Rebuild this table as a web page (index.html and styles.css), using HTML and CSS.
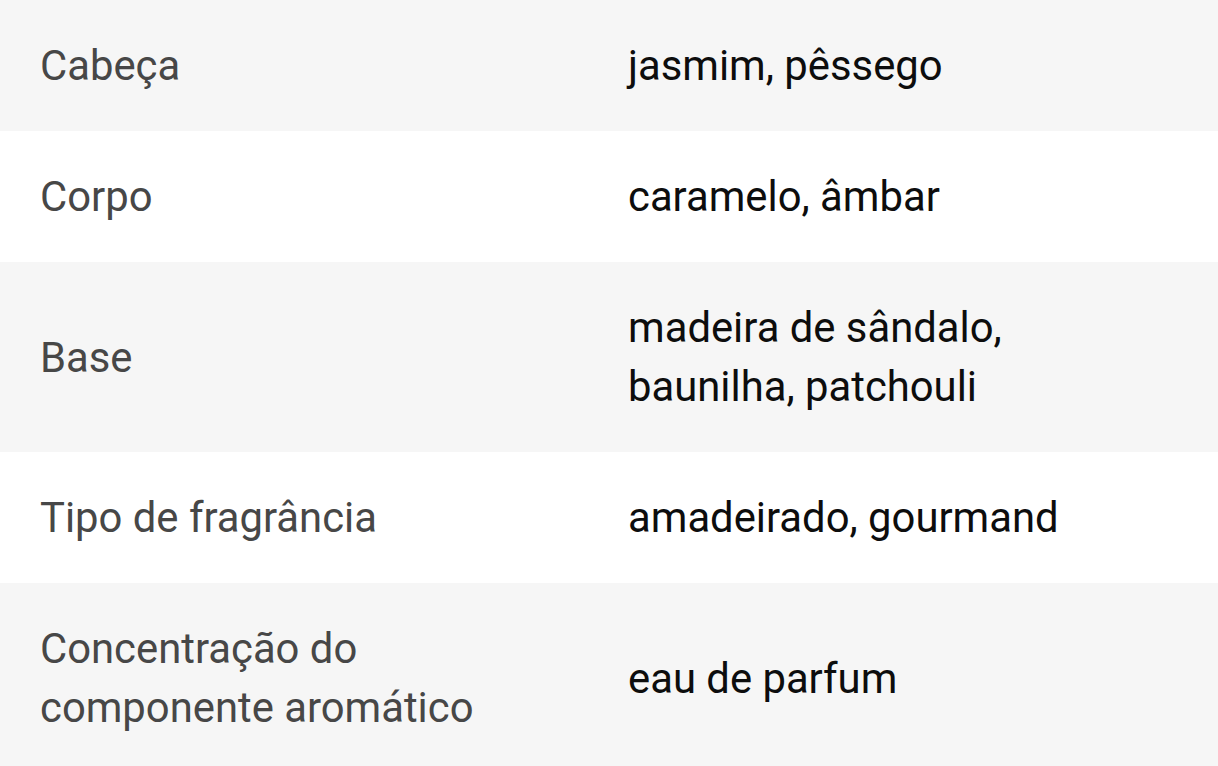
FILE: index.html
```html
<!DOCTYPE html>
<html lang="pt">
<head>
<meta charset="utf-8">
<link rel="stylesheet" href="styles.css">
</head>
<body>
<div class="specs">
  <div class="row alt"><div class="label">Cabeça</div><div class="value">jasmim, pêssego</div></div>
  <div class="row"><div class="label">Corpo</div><div class="value">caramelo, âmbar</div></div>
  <div class="row alt"><div class="label">Base</div><div class="value">madeira de sândalo, baunilha, patchouli</div></div>
  <div class="row"><div class="label">Tipo de fragrância</div><div class="value">amadeirado, gourmand</div></div>
  <div class="row alt"><div class="label">Concentração do componente aromático</div><div class="value">eau de parfum</div></div>
</div>
</body>
</html>
```
FILE: styles.css
```css
html, body {
  margin: 0;
  padding: 0;
  background: #ffffff;
}
body {
  font-family: Roboto, "Liberation Sans", sans-serif;
  font-size: 41.8px;
  line-height: 59px;
}
.specs {
  display: flex;
  flex-direction: column;
}
.row {
  display: grid;
  grid-template-columns: 500px 490px;
  column-gap: 88px;
  align-items: center;
  padding: 36px 40px;
  background: #ffffff;
}
.row.alt {
  background: #f6f6f6;
}
.label {
  color: #474747;
}
.value {
  color: #0d0d0d;
}
```
